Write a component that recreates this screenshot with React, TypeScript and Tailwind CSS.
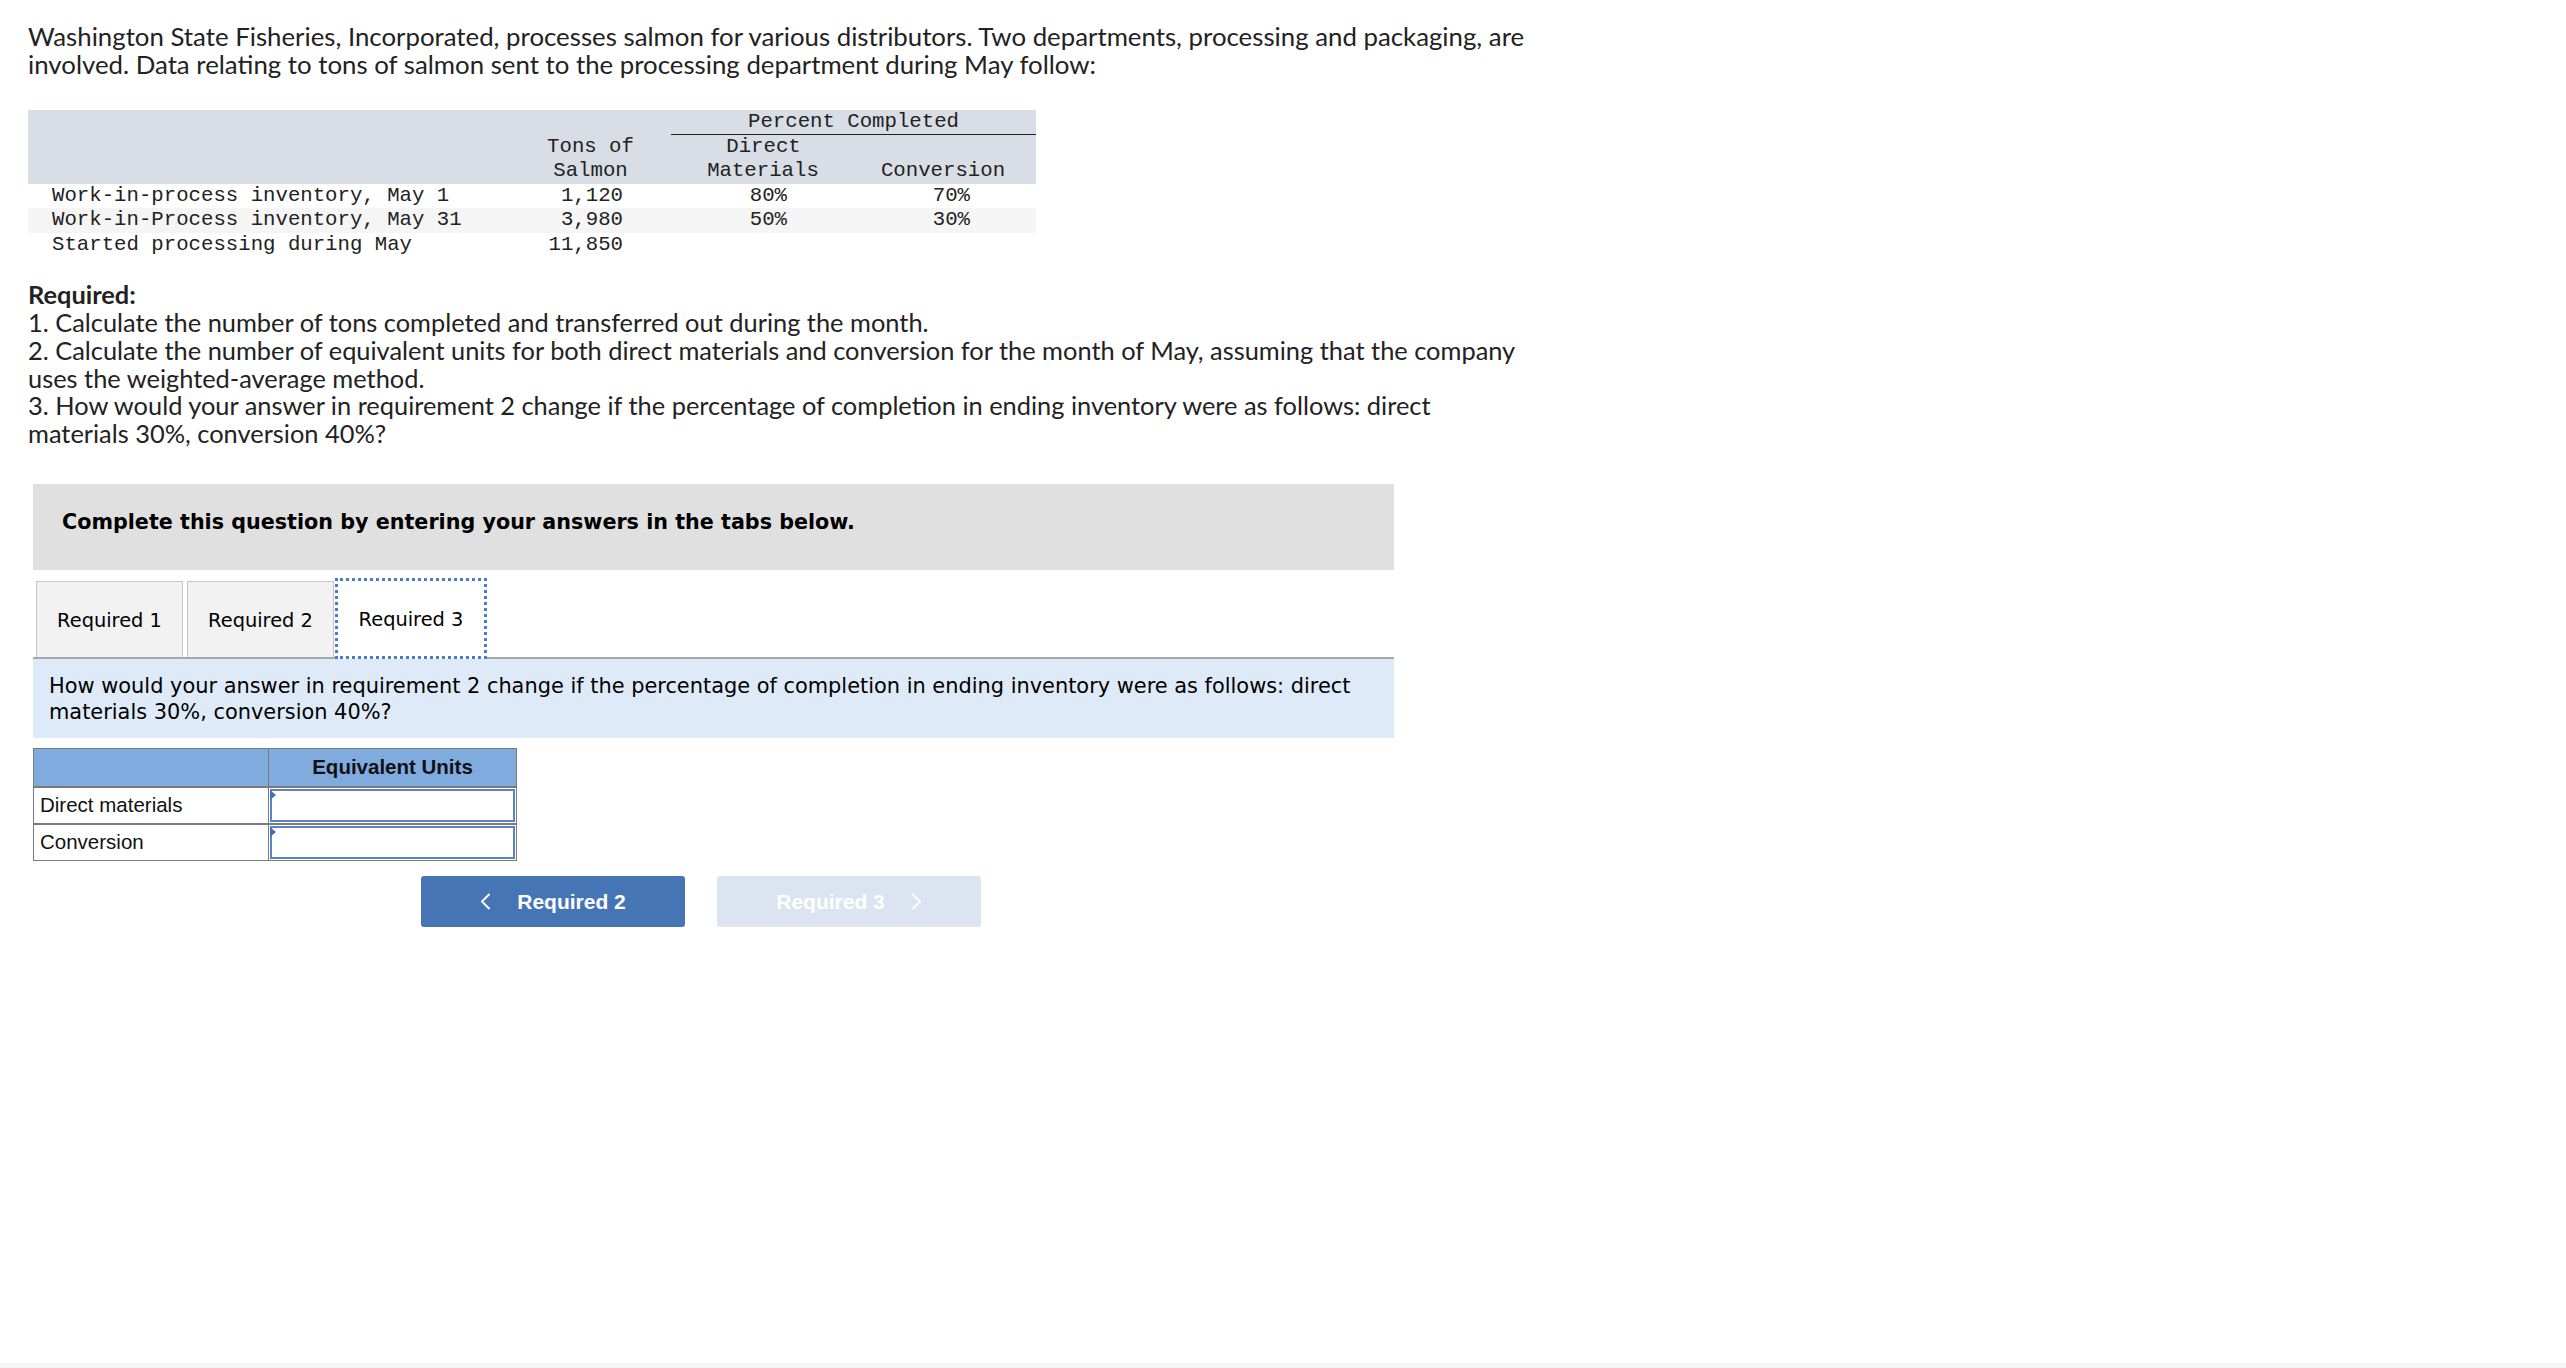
import React from 'react';

const sans = { fontFamily: 'Lato, "Liberation Sans", sans-serif' };
const mono = { fontFamily: '"Liberation Mono", "DejaVu Sans Mono", monospace' };
const verdana = { fontFamily: '"DejaVu Sans", Verdana, sans-serif' };
const arial = { fontFamily: '"Liberation Sans", Arial, sans-serif' };

const rows = [
  { label: 'Work-in-process inventory, May 1', tons: '1,120', dm: '80%', conv: '70%', shade: false },
  { label: 'Work-in-Process inventory, May 31', tons: '3,980', dm: '50%', conv: '30%', shade: true },
  { label: 'Started processing during May', tons: '11,850', dm: '', conv: '', shade: false },
];

const Chevron = ({ dir }: { dir: 'left' | 'right' }) => (
  <svg width="11" height="17" viewBox="0 0 11 17" fill="none">
    <polyline
      points={dir === 'left' ? '9,1.5 2,8.5 9,15.5' : '2,1.5 9,8.5 2,15.5'}
      stroke="white"
      strokeWidth="2"
      strokeLinecap="round"
      strokeLinejoin="round"
    />
  </svg>
);

const InputCell = () => (
  <div className="relative h-full p-[1px] border-l border-[#7a7a7a]">
    <div className="h-full bg-white border-2 border-[#5b83c2]" />
    <span className="absolute top-[2px] left-[1px] w-0 h-0 border-y-[5px] border-y-transparent border-l-[6px] border-l-[#3f70bd]" />
  </div>
);

export default function App() {
  return (
    <div className="h-[1368px] flex flex-col bg-white text-[#222]">
      <div className="pl-[28px] pt-[23px]">
        <div className="text-[25.8px] leading-[27.6px] whitespace-nowrap" style={sans}>
          <div>Washington State Fisheries, Incorporated, processes salmon for various distributors. Two departments, processing and packaging, are</div>
          <div>involved. Data relating to tons of salmon sent to the processing department during May follow:</div>
        </div>

        <div className="mt-[32px] w-[1008px] text-[20.7px] whitespace-nowrap" style={mono}>
          <div className="bg-[#d9dde6] grid grid-cols-[502px_141px_189px_176px]">
            <div className="h-[24.5px]" />
            <div className="h-[24.5px]" />
            <div className="col-span-2 h-[24.5px] leading-[23.5px] text-center border-b border-[#222]">Percent Completed</div>
            <div className="h-[24.5px]" />
            <div className="h-[24.5px] leading-[24.5px] text-center pr-[20px]">Tons of</div>
            <div className="h-[24.5px] leading-[24.5px] text-center pr-[4px]">Direct</div>
            <div className="h-[24.5px]" />
            <div className="h-[24.5px]" />
            <div className="h-[24.5px] leading-[24.5px] text-center pr-[20px]">Salmon</div>
            <div className="h-[24.5px] leading-[24.5px] text-center pr-[5px]">Materials</div>
            <div className="h-[24.5px] leading-[24.5px] text-center pr-[10px]">Conversion</div>
          </div>
          {rows.map((r) => (
            <div
              key={r.label}
              className={`grid grid-cols-[502px_141px_189px_176px] h-[24.5px] leading-[24.5px] ${r.shade ? 'bg-[#f5f5f5]' : 'bg-white'}`}
            >
              <div className="pl-[24px]">{r.label}</div>
              <div className="text-right pr-[48px]">{r.tons}</div>
              <div className="text-right pr-[73px]">{r.dm}</div>
              <div className="text-right pr-[66px]">{r.conv}</div>
            </div>
          ))}
        </div>

        <div className="mt-[24px] text-[25.4px] leading-[27.8px] whitespace-nowrap" style={sans}>
          <div className="font-bold">Required:</div>
          <div>1. Calculate the number of tons completed and transferred out during the month.</div>
          <div>2. Calculate the number of equivalent units for both direct materials and conversion for the month of May, assuming that the company</div>
          <div>uses the weighted-average method.</div>
          <div>3. How would your answer in requirement 2 change if the percentage of completion in ending inventory were as follows: direct</div>
          <div>materials 30%, conversion 40%?</div>
        </div>

        <div className="ml-[5px] w-[1361px]">
          <div className="mt-[36px] h-[86px] bg-[#e0e0e0] pl-[29px] pt-[25px]">
            <div className="text-[20.7px] leading-[26px] font-bold text-black" style={verdana}>
              Complete this question by entering your answers in the tabs below.
            </div>
          </div>

          <div className="mt-[8px] flex items-end pl-[3px] border-b-2 border-[#a8a8a8]" style={verdana}>
            <div className="w-[147px] h-[76px] pt-[2px] flex items-center justify-center bg-[#f2f2f2] border border-b-0 border-[#c6c6c6] text-[19.4px] text-black">
              Required 1
            </div>
            <div className="ml-[4px] w-[147px] h-[76px] pt-[2px] flex items-center justify-center bg-[#f2f2f2] border border-b-0 border-[#c6c6c6] text-[19.4px] text-black">
              Required 2
            </div>
            <div className="relative z-10 -mb-[2px] ml-[1px] w-[152px] h-[81px] pt-[2px] flex items-center justify-center bg-white border-[3px] border-dotted border-[#4a7ccb] text-[19.4px] text-black">
              Required 3
            </div>
          </div>

          <div className="bg-[#deeaf7] pl-[16px] pt-[14px] pb-[13px] text-[20.9px] leading-[26px] text-black whitespace-nowrap" style={verdana}>
            <div>How would your answer in requirement 2 change if the percentage of completion in ending inventory were as follows: direct</div>
            <div>materials 30%, conversion 40%?</div>
          </div>

          <div className="mt-[10px] w-[484px] border border-[#7a7a7a] text-[20.5px] text-[#111]" style={arial}>
            <div className="grid grid-cols-[234px_248px] h-[37px] bg-[#80abdf]">
              <div />
              <div className="border-l border-[#7a7a7a] flex items-center justify-center font-bold">Equivalent Units</div>
            </div>
            <div className="grid grid-cols-[234px_248px] h-[37px] border-t-2 border-[#7a7a7a] bg-white">
              <div className="flex items-center pl-[6px]">Direct materials</div>
              <InputCell />
            </div>
            <div className="grid grid-cols-[234px_248px] h-[37px] border-t-2 border-[#7a7a7a] bg-white">
              <div className="flex items-center pl-[6px]">Conversion</div>
              <InputCell />
            </div>
          </div>

          <div className="mt-[15px] ml-[388px] flex gap-[32px]" style={arial}>
            <button className="w-[264px] h-[51px] rounded-[3px] bg-[#4675b6] flex items-center justify-center gap-[26px] text-white text-[21px] font-bold">
              <Chevron dir="left" />
              <span>Required 2</span>
            </button>
            <button className="w-[264px] h-[51px] rounded-[3px] bg-[#dbe4f0] flex items-center justify-center gap-[26px] text-white text-[21px] font-bold">
              <span>Required 3</span>
              <Chevron dir="right" />
            </button>
          </div>
        </div>
      </div>
      <div className="flex-1" />
      <div className="h-[5px] bg-[#f4f4f4]" />
    </div>
  );
}
